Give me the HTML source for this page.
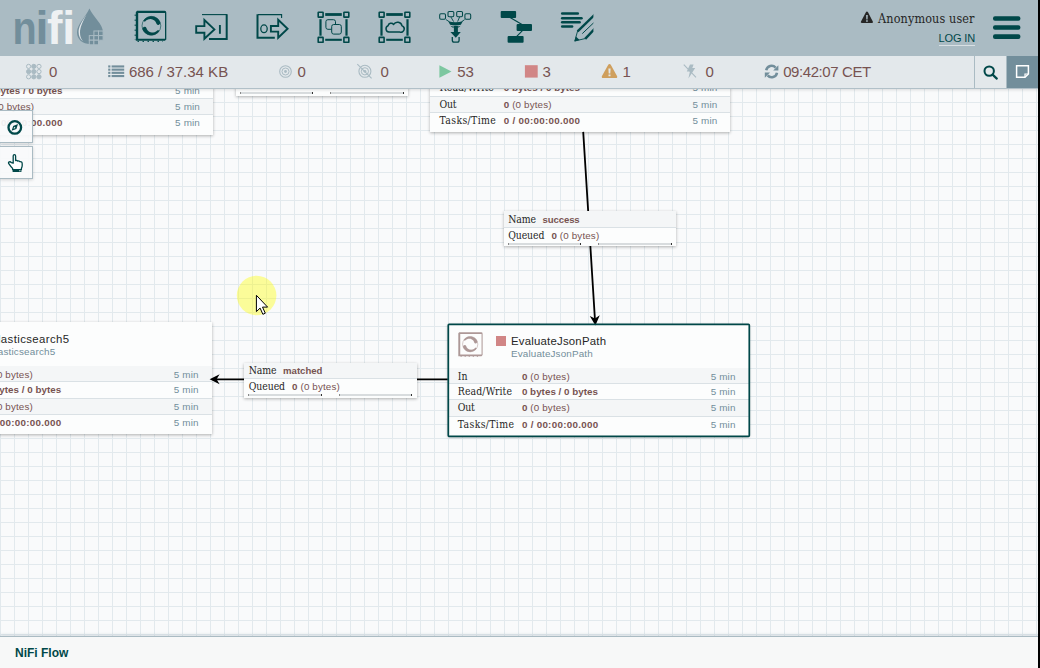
<!DOCTYPE html>
<html lang="en">
<head>
<meta charset="utf-8">
<title>NiFi Flow</title>
<style>
*{box-sizing:border-box;margin:0;padding:0}
html,body{width:1040px;height:668px;overflow:hidden}
body{position:relative;font-family:"Liberation Sans",sans-serif;background:#f9fafb;color:#262626}
.abs{position:absolute}
#canvas{position:absolute;left:0;top:56px;width:1040px;height:612px;background-color:#f9fafb;
background-image:linear-gradient(to right,#e2e9ed 1px,transparent 1px),linear-gradient(to bottom,#e2e9ed 1px,transparent 1px);
background-size:14px 14px;background-position:0px 4px;overflow:hidden}
#header{position:absolute;left:0;top:0;width:1040px;height:56px;background:#aabbc3}
#status{position:absolute;left:0;top:56px;width:1040px;height:32px;background:#e3e8eb;box-shadow:0 1px 0 #b1c0c8,0 2px 3px rgba(0,0,0,.13);clip-path:inset(0 0 -8px 0);font-size:15px;color:#775351}
#crumbs{position:absolute;left:0;top:636px;width:1040px;height:32px;background:#f7f8f8;border-top:1px solid #aabbc3;box-shadow:0 -1px 3px rgba(170,187,195,.5)}
#crumbs span{position:absolute;left:15px;top:9px;font-size:12px;font-weight:bold;color:#004849}
#strip{position:absolute;left:1038px;top:0;width:2px;height:668px;background:#000;z-index:50}
.serif{font-family:"DejaVu Serif","Liberation Serif",serif}
.t{position:absolute;white-space:nowrap;line-height:1}
.st{position:absolute;top:0;line-height:32px;white-space:nowrap;font-size:15px;color:#775351}
.ss{font-family:"Liberation Sans",sans-serif}
.sf{font-family:"DejaVu Serif Condensed","DejaVu Serif","Liberation Serif",serif}
.proc{position:absolute;width:300.6px;height:111.8px;background:#fcfdfd;box-shadow:0 1px 3px rgba(0,0,0,.3);overflow:visible}
.proc.sel{box-shadow:0 1px 3px rgba(0,0,0,.3)}
.row{position:absolute;left:0;width:100%}
.row.g{background:#f4f6f7}
.sep{position:absolute;left:0;width:100%;height:1px;background:#dae1e5}
.clabel{position:absolute;width:172.8px;height:35.2px;background:#fcfdfd;box-shadow:0 1px 3px rgba(0,0,0,.3)}
.bar{position:absolute;top:31.6px;width:73.5px;height:2.2px;background:#d8dcde;border-left:1px solid #8a8a8a;border-right:1px solid #333}
.pal{position:absolute;left:0;width:32.5px;height:33px;background:rgba(249,250,251,.93);border:1px solid #aabbc3;border-left:none;box-shadow:0 1px 3px rgba(0,0,0,.16)}
.t b{font-weight:bold}
</style>
</head>
<body>
<div id="canvas">
<div class="proc" style="left:-87.3px;top:-33.1px;width:300.1px">
<div class="row g" style="top:43.7px;height:15.6px"></div>
<div class="row g" style="top:75.7px;height:16.3px"></div>
<div class="sep" style="top:58.8px"></div>
<div class="sep" style="top:75.2px"></div>
<div class="sep" style="top:91.5px"></div>
<svg class="abs" style="left:9.7px;top:7.7px" width="25" height="25" viewBox="0 0 24.6 24.6"><path d="M1.2 0.3 H22.9 Q24.2 0.3 24.2 1.6 V22.6 L23.1 23.8 H0.3 V1.3 Z M2.2 1.9 V22.2 H23.2 V1.9 Z" fill="#ad9897" fill-rule="evenodd"/><path d="M2.5 24.2 H22" stroke="#ad9897" stroke-width=".8" stroke-dasharray="1.2 2.8" fill="none"/><circle cx="12" cy="12" r="7.5" fill="none" stroke="#ad9897" stroke-width=".5"/><path d="M5.55 7.97 L5.94 7.41 L6.38 6.88 L6.87 6.40 L7.39 5.96 L7.95 5.57 L8.55 5.23 L9.17 4.95 L9.82 4.72 L10.48 4.55 L11.16 4.45 L11.85 4.40 L12.53 4.42 L13.21 4.50 L13.88 4.64 L14.54 4.84 L15.17 5.09 L15.78 5.41 L16.36 5.77 L16.90 6.19 L17.41 6.66 L17.86 7.17 L18.28 7.71 L18.64 8.30 L18.94 8.91 A1.65 1.65 0 0 1 15.93 10.25 L15.82 9.87 L15.68 9.49 L15.50 9.11 L15.28 8.75 L15.03 8.41 L14.74 8.09 L14.41 7.79 L14.06 7.52 L13.67 7.28 L13.26 7.07 L12.82 6.90 L12.37 6.76 L11.89 6.67 L11.40 6.62 L10.91 6.62 L10.40 6.67 L9.90 6.76 L9.40 6.90 L8.91 7.09 L8.43 7.32 L7.97 7.60 L7.53 7.93 L7.12 8.30 L6.74 8.71 Z" fill="#ad9897"/><path d="M18.45 16.03 L18.06 16.59 L17.62 17.12 L17.13 17.60 L16.61 18.04 L16.05 18.43 L15.45 18.77 L14.83 19.05 L14.18 19.28 L13.52 19.45 L12.84 19.55 L12.15 19.60 L11.47 19.58 L10.79 19.50 L10.12 19.36 L9.46 19.16 L8.83 18.91 L8.22 18.59 L7.64 18.23 L7.10 17.81 L6.59 17.34 L6.14 16.83 L5.72 16.29 L5.36 15.70 L5.06 15.09 A1.65 1.65 0 0 1 8.07 13.75 L8.18 14.13 L8.32 14.51 L8.50 14.89 L8.72 15.25 L8.97 15.59 L9.26 15.91 L9.59 16.21 L9.94 16.48 L10.33 16.72 L10.74 16.93 L11.18 17.10 L11.63 17.24 L12.11 17.33 L12.60 17.38 L13.09 17.38 L13.60 17.33 L14.10 17.24 L14.60 17.10 L15.09 16.91 L15.57 16.68 L16.03 16.40 L16.47 16.07 L16.88 15.70 L17.26 15.29 Z" fill="#ad9897"/></svg>
<div class="abs" style="left:47.9px;top:11.9px;width:9.6px;height:9.6px;background:#d18686"></div>
</div>
<div class="proc" style="left:430.1px;top:-35.4px;width:300.1px">
<div class="row g" style="top:43.7px;height:15.6px"></div>
<div class="row g" style="top:75.7px;height:16.3px"></div>
<div class="sep" style="top:58.8px"></div>
<div class="sep" style="top:75.2px"></div>
<div class="sep" style="top:91.5px"></div>
<svg class="abs" style="left:9.7px;top:7.7px" width="25" height="25" viewBox="0 0 24.6 24.6"><path d="M1.2 0.3 H22.9 Q24.2 0.3 24.2 1.6 V22.6 L23.1 23.8 H0.3 V1.3 Z M2.2 1.9 V22.2 H23.2 V1.9 Z" fill="#ad9897" fill-rule="evenodd"/><path d="M2.5 24.2 H22" stroke="#ad9897" stroke-width=".8" stroke-dasharray="1.2 2.8" fill="none"/><circle cx="12" cy="12" r="7.5" fill="none" stroke="#ad9897" stroke-width=".5"/><path d="M5.55 7.97 L5.94 7.41 L6.38 6.88 L6.87 6.40 L7.39 5.96 L7.95 5.57 L8.55 5.23 L9.17 4.95 L9.82 4.72 L10.48 4.55 L11.16 4.45 L11.85 4.40 L12.53 4.42 L13.21 4.50 L13.88 4.64 L14.54 4.84 L15.17 5.09 L15.78 5.41 L16.36 5.77 L16.90 6.19 L17.41 6.66 L17.86 7.17 L18.28 7.71 L18.64 8.30 L18.94 8.91 A1.65 1.65 0 0 1 15.93 10.25 L15.82 9.87 L15.68 9.49 L15.50 9.11 L15.28 8.75 L15.03 8.41 L14.74 8.09 L14.41 7.79 L14.06 7.52 L13.67 7.28 L13.26 7.07 L12.82 6.90 L12.37 6.76 L11.89 6.67 L11.40 6.62 L10.91 6.62 L10.40 6.67 L9.90 6.76 L9.40 6.90 L8.91 7.09 L8.43 7.32 L7.97 7.60 L7.53 7.93 L7.12 8.30 L6.74 8.71 Z" fill="#ad9897"/><path d="M18.45 16.03 L18.06 16.59 L17.62 17.12 L17.13 17.60 L16.61 18.04 L16.05 18.43 L15.45 18.77 L14.83 19.05 L14.18 19.28 L13.52 19.45 L12.84 19.55 L12.15 19.60 L11.47 19.58 L10.79 19.50 L10.12 19.36 L9.46 19.16 L8.83 18.91 L8.22 18.59 L7.64 18.23 L7.10 17.81 L6.59 17.34 L6.14 16.83 L5.72 16.29 L5.36 15.70 L5.06 15.09 A1.65 1.65 0 0 1 8.07 13.75 L8.18 14.13 L8.32 14.51 L8.50 14.89 L8.72 15.25 L8.97 15.59 L9.26 15.91 L9.59 16.21 L9.94 16.48 L10.33 16.72 L10.74 16.93 L11.18 17.10 L11.63 17.24 L12.11 17.33 L12.60 17.38 L13.09 17.38 L13.60 17.33 L14.10 17.24 L14.60 17.10 L15.09 16.91 L15.57 16.68 L16.03 16.40 L16.47 16.07 L16.88 15.70 L17.26 15.29 Z" fill="#ad9897"/></svg>
<div class="abs" style="left:47.9px;top:11.9px;width:9.6px;height:9.6px;background:#d18686"></div>
</div>
<div class="proc" style="left:-88.6px;top:266.4px;width:300.1px">
<div class="row g" style="top:43.7px;height:15.6px"></div>
<div class="row g" style="top:75.7px;height:16.3px"></div>
<div class="sep" style="top:58.8px"></div>
<div class="sep" style="top:75.2px"></div>
<div class="sep" style="top:91.5px"></div>
<svg class="abs" style="left:9.7px;top:7.7px" width="25" height="25" viewBox="0 0 24.6 24.6"><path d="M1.2 0.3 H22.9 Q24.2 0.3 24.2 1.6 V22.6 L23.1 23.8 H0.3 V1.3 Z M2.2 1.9 V22.2 H23.2 V1.9 Z" fill="#ad9897" fill-rule="evenodd"/><path d="M2.5 24.2 H22" stroke="#ad9897" stroke-width=".8" stroke-dasharray="1.2 2.8" fill="none"/><circle cx="12" cy="12" r="7.5" fill="none" stroke="#ad9897" stroke-width=".5"/><path d="M5.55 7.97 L5.94 7.41 L6.38 6.88 L6.87 6.40 L7.39 5.96 L7.95 5.57 L8.55 5.23 L9.17 4.95 L9.82 4.72 L10.48 4.55 L11.16 4.45 L11.85 4.40 L12.53 4.42 L13.21 4.50 L13.88 4.64 L14.54 4.84 L15.17 5.09 L15.78 5.41 L16.36 5.77 L16.90 6.19 L17.41 6.66 L17.86 7.17 L18.28 7.71 L18.64 8.30 L18.94 8.91 A1.65 1.65 0 0 1 15.93 10.25 L15.82 9.87 L15.68 9.49 L15.50 9.11 L15.28 8.75 L15.03 8.41 L14.74 8.09 L14.41 7.79 L14.06 7.52 L13.67 7.28 L13.26 7.07 L12.82 6.90 L12.37 6.76 L11.89 6.67 L11.40 6.62 L10.91 6.62 L10.40 6.67 L9.90 6.76 L9.40 6.90 L8.91 7.09 L8.43 7.32 L7.97 7.60 L7.53 7.93 L7.12 8.30 L6.74 8.71 Z" fill="#ad9897"/><path d="M18.45 16.03 L18.06 16.59 L17.62 17.12 L17.13 17.60 L16.61 18.04 L16.05 18.43 L15.45 18.77 L14.83 19.05 L14.18 19.28 L13.52 19.45 L12.84 19.55 L12.15 19.60 L11.47 19.58 L10.79 19.50 L10.12 19.36 L9.46 19.16 L8.83 18.91 L8.22 18.59 L7.64 18.23 L7.10 17.81 L6.59 17.34 L6.14 16.83 L5.72 16.29 L5.36 15.70 L5.06 15.09 A1.65 1.65 0 0 1 8.07 13.75 L8.18 14.13 L8.32 14.51 L8.50 14.89 L8.72 15.25 L8.97 15.59 L9.26 15.91 L9.59 16.21 L9.94 16.48 L10.33 16.72 L10.74 16.93 L11.18 17.10 L11.63 17.24 L12.11 17.33 L12.60 17.38 L13.09 17.38 L13.60 17.33 L14.10 17.24 L14.60 17.10 L15.09 16.91 L15.57 16.68 L16.03 16.40 L16.47 16.07 L16.88 15.70 L17.26 15.29 Z" fill="#ad9897"/></svg>
<div class="abs" style="left:47.9px;top:11.9px;width:9.6px;height:9.6px;background:#d18686"></div>
</div>
<div class="proc sel" style="left:448.3px;top:268.3px;width:300.6px">
<div class="row g" style="top:43.7px;height:15.6px"></div>
<div class="row g" style="top:75.7px;height:16.3px"></div>
<div class="sep" style="top:58.8px"></div>
<div class="sep" style="top:75.2px"></div>
<div class="sep" style="top:91.5px"></div>
<svg class="abs" style="left:9.7px;top:7.7px" width="25" height="25" viewBox="0 0 24.6 24.6"><path d="M1.2 0.3 H22.9 Q24.2 0.3 24.2 1.6 V22.6 L23.1 23.8 H0.3 V1.3 Z M2.2 1.9 V22.2 H23.2 V1.9 Z" fill="#ad9897" fill-rule="evenodd"/><path d="M2.5 24.2 H22" stroke="#ad9897" stroke-width=".8" stroke-dasharray="1.2 2.8" fill="none"/><circle cx="12" cy="12" r="7.5" fill="none" stroke="#ad9897" stroke-width=".5"/><path d="M5.55 7.97 L5.94 7.41 L6.38 6.88 L6.87 6.40 L7.39 5.96 L7.95 5.57 L8.55 5.23 L9.17 4.95 L9.82 4.72 L10.48 4.55 L11.16 4.45 L11.85 4.40 L12.53 4.42 L13.21 4.50 L13.88 4.64 L14.54 4.84 L15.17 5.09 L15.78 5.41 L16.36 5.77 L16.90 6.19 L17.41 6.66 L17.86 7.17 L18.28 7.71 L18.64 8.30 L18.94 8.91 A1.65 1.65 0 0 1 15.93 10.25 L15.82 9.87 L15.68 9.49 L15.50 9.11 L15.28 8.75 L15.03 8.41 L14.74 8.09 L14.41 7.79 L14.06 7.52 L13.67 7.28 L13.26 7.07 L12.82 6.90 L12.37 6.76 L11.89 6.67 L11.40 6.62 L10.91 6.62 L10.40 6.67 L9.90 6.76 L9.40 6.90 L8.91 7.09 L8.43 7.32 L7.97 7.60 L7.53 7.93 L7.12 8.30 L6.74 8.71 Z" fill="#ad9897"/><path d="M18.45 16.03 L18.06 16.59 L17.62 17.12 L17.13 17.60 L16.61 18.04 L16.05 18.43 L15.45 18.77 L14.83 19.05 L14.18 19.28 L13.52 19.45 L12.84 19.55 L12.15 19.60 L11.47 19.58 L10.79 19.50 L10.12 19.36 L9.46 19.16 L8.83 18.91 L8.22 18.59 L7.64 18.23 L7.10 17.81 L6.59 17.34 L6.14 16.83 L5.72 16.29 L5.36 15.70 L5.06 15.09 A1.65 1.65 0 0 1 8.07 13.75 L8.18 14.13 L8.32 14.51 L8.50 14.89 L8.72 15.25 L8.97 15.59 L9.26 15.91 L9.59 16.21 L9.94 16.48 L10.33 16.72 L10.74 16.93 L11.18 17.10 L11.63 17.24 L12.11 17.33 L12.60 17.38 L13.09 17.38 L13.60 17.33 L14.10 17.24 L14.60 17.10 L15.09 16.91 L15.57 16.68 L16.03 16.40 L16.47 16.07 L16.88 15.70 L17.26 15.29 Z" fill="#ad9897"/></svg>
<div class="abs" style="left:47.9px;top:11.9px;width:9.6px;height:9.6px;background:#d18686"></div>
</div>
<div class="t ss" style="top:-22px;font-size:11.4px;color:#262626;letter-spacing:0.402px;right:968.40px;">PutElasticsearch5</div>
<div class="t ss" style="top:-8px;font-size:9.9px;color:#728e9b;letter-spacing:0.185px;right:983.00px;">PutElasticsearch5</div>
<div class="t sf" style="top:13px;font-size:10.4px;color:#262626;letter-spacing:-0.059px;left:-77.80px;">In</div>
<div class="t ss" style="top:14px;font-size:9.8px;color:#775351;letter-spacing:0.146px;left:-13.70px;"><b>0</b> (0 bytes)</div>
<div class="t ss" style="top:14px;font-size:9.9px;color:#728e9b;letter-spacing:0.149px;left:175.10px;">5 min</div>
<div class="t sf" style="top:29px;font-size:10.4px;color:#262626;letter-spacing:0.114px;left:-77.80px;">Read/Write</div>
<div class="t ss" style="top:30px;font-size:9.8px;color:#775351;letter-spacing:0.029px;left:-13.70px;"><b>0 bytes / 0 bytes</b></div>
<div class="t ss" style="top:30px;font-size:9.9px;color:#728e9b;letter-spacing:0.149px;left:175.10px;">5 min</div>
<div class="t sf" style="top:45px;font-size:10.4px;color:#262626;letter-spacing:-0.218px;left:-77.80px;">Out</div>
<div class="t ss" style="top:46px;font-size:9.8px;color:#775351;letter-spacing:0.146px;left:-13.70px;"><b>0</b> (0 bytes)</div>
<div class="t ss" style="top:46px;font-size:9.9px;color:#728e9b;letter-spacing:0.149px;left:175.10px;">5 min</div>
<div class="t sf" style="top:61px;font-size:10.4px;color:#262626;letter-spacing:0.347px;left:-77.80px;">Tasks/Time</div>
<div class="t ss" style="top:62px;font-size:9.8px;color:#775351;letter-spacing:0.287px;left:-13.70px;"><b>0 / 00:00:00.000</b></div>
<div class="t ss" style="top:62px;font-size:9.9px;color:#728e9b;letter-spacing:0.149px;left:175.10px;">5 min</div>
<div class="t ss" style="top:-24px;font-size:11.4px;color:#262626;letter-spacing:0.211px;left:492.80px;">EvaluateJsonPath</div>
<div class="t ss" style="top:-11px;font-size:9.9px;color:#728e9b;letter-spacing:0.137px;left:492.80px;">EvaluateJsonPath</div>
<div class="t sf" style="top:11px;font-size:10.4px;color:#262626;letter-spacing:-0.059px;left:439.60px;">In</div>
<div class="t ss" style="top:12px;font-size:9.8px;color:#775351;letter-spacing:0.146px;left:503.70px;"><b>0</b> (0 bytes)</div>
<div class="t ss" style="top:12px;font-size:9.9px;color:#728e9b;letter-spacing:0.149px;left:692.50px;">5 min</div>
<div class="t sf" style="top:26px;font-size:10.4px;color:#262626;letter-spacing:0.114px;left:439.60px;">Read/Write</div>
<div class="t ss" style="top:27px;font-size:9.8px;color:#775351;letter-spacing:0.029px;left:503.70px;"><b>0 bytes / 0 bytes</b></div>
<div class="t ss" style="top:27px;font-size:9.9px;color:#728e9b;letter-spacing:0.149px;left:692.50px;">5 min</div>
<div class="t sf" style="top:43px;font-size:10.4px;color:#262626;letter-spacing:-0.218px;left:439.60px;">Out</div>
<div class="t ss" style="top:44px;font-size:9.8px;color:#775351;letter-spacing:0.146px;left:503.70px;"><b>0</b> (0 bytes)</div>
<div class="t ss" style="top:44px;font-size:9.9px;color:#728e9b;letter-spacing:0.149px;left:692.50px;">5 min</div>
<div class="t sf" style="top:59px;font-size:10.4px;color:#262626;letter-spacing:0.347px;left:439.60px;">Tasks/Time</div>
<div class="t ss" style="top:60px;font-size:9.8px;color:#775351;letter-spacing:0.287px;left:503.70px;"><b>0 / 00:00:00.000</b></div>
<div class="t ss" style="top:60px;font-size:9.9px;color:#728e9b;letter-spacing:0.149px;left:692.50px;">5 min</div>
<div class="t ss" style="top:278px;font-size:11.4px;color:#262626;letter-spacing:0.402px;right:970.40px;">PutElasticsearch5</div>
<div class="t ss" style="top:291px;font-size:9.9px;color:#728e9b;letter-spacing:0.185px;right:984.60px;">PutElasticsearch5</div>
<div class="t sf" style="top:313px;font-size:10.4px;color:#262626;letter-spacing:-0.059px;left:-79.10px;">In</div>
<div class="t ss" style="top:314px;font-size:9.8px;color:#775351;letter-spacing:0.146px;left:-15.00px;"><b>0</b> (0 bytes)</div>
<div class="t ss" style="top:314px;font-size:9.9px;color:#728e9b;letter-spacing:0.149px;left:173.80px;">5 min</div>
<div class="t sf" style="top:328px;font-size:10.4px;color:#262626;letter-spacing:0.114px;left:-79.10px;">Read/Write</div>
<div class="t ss" style="top:329px;font-size:9.8px;color:#775351;letter-spacing:0.029px;left:-15.00px;"><b>0 bytes / 0 bytes</b></div>
<div class="t ss" style="top:329px;font-size:9.9px;color:#728e9b;letter-spacing:0.149px;left:173.80px;">5 min</div>
<div class="t sf" style="top:345px;font-size:10.4px;color:#262626;letter-spacing:-0.218px;left:-79.10px;">Out</div>
<div class="t ss" style="top:346px;font-size:9.8px;color:#775351;letter-spacing:0.146px;left:-15.00px;"><b>0</b> (0 bytes)</div>
<div class="t ss" style="top:346px;font-size:9.9px;color:#728e9b;letter-spacing:0.149px;left:173.80px;">5 min</div>
<div class="t sf" style="top:361px;font-size:10.4px;color:#262626;letter-spacing:0.347px;left:-79.10px;">Tasks/Time</div>
<div class="t ss" style="top:362px;font-size:9.8px;color:#775351;letter-spacing:0.287px;left:-15.00px;"><b>0 / 00:00:00.000</b></div>
<div class="t ss" style="top:362px;font-size:9.9px;color:#728e9b;letter-spacing:0.149px;left:173.80px;">5 min</div>
<div class="t ss" style="top:280px;font-size:11.4px;color:#262626;letter-spacing:0.211px;left:511.00px;">EvaluateJsonPath</div>
<div class="t ss" style="top:293px;font-size:9.9px;color:#728e9b;letter-spacing:0.137px;left:511.00px;">EvaluateJsonPath</div>
<div class="t sf" style="top:315px;font-size:10.4px;color:#262626;letter-spacing:-0.059px;left:457.80px;">In</div>
<div class="t ss" style="top:316px;font-size:9.8px;color:#775351;letter-spacing:0.146px;left:521.90px;"><b>0</b> (0 bytes)</div>
<div class="t ss" style="top:316px;font-size:9.9px;color:#728e9b;letter-spacing:0.149px;left:710.70px;">5 min</div>
<div class="t sf" style="top:330px;font-size:10.4px;color:#262626;letter-spacing:0.114px;left:457.80px;">Read/Write</div>
<div class="t ss" style="top:331px;font-size:9.8px;color:#775351;letter-spacing:0.029px;left:521.90px;"><b>0 bytes / 0 bytes</b></div>
<div class="t ss" style="top:331px;font-size:9.9px;color:#728e9b;letter-spacing:0.149px;left:710.70px;">5 min</div>
<div class="t sf" style="top:346px;font-size:10.4px;color:#262626;letter-spacing:-0.218px;left:457.80px;">Out</div>
<div class="t ss" style="top:347px;font-size:9.8px;color:#775351;letter-spacing:0.146px;left:521.90px;"><b>0</b> (0 bytes)</div>
<div class="t ss" style="top:347px;font-size:9.9px;color:#728e9b;letter-spacing:0.149px;left:710.70px;">5 min</div>
<div class="t sf" style="top:363px;font-size:10.4px;color:#262626;letter-spacing:0.347px;left:457.80px;">Tasks/Time</div>
<div class="t ss" style="top:364px;font-size:9.8px;color:#775351;letter-spacing:0.287px;left:521.90px;"><b>0 / 00:00:00.000</b></div>
<div class="t ss" style="top:364px;font-size:9.9px;color:#728e9b;letter-spacing:0.149px;left:710.70px;">5 min</div>
<svg class="abs" style="left:0;top:0" width="1040" height="612" viewBox="0 0 1040 612"><path d="M583.2 75.9 L595.1 265.6" stroke="#000" stroke-width="1.8" fill="none"/><path d="M0 0 L-10 -5 L-7 0 L-10 5 Z" fill="#000" transform="translate(595.4 269.6) rotate(86.4)"/><path d="M447.8 323.3 H214" stroke="#000" stroke-width="1.8" fill="none"/><path d="M0 0 L-10 -5 L-7 0 L-10 5 Z" fill="#000" transform="translate(209.6 323.3) rotate(180.0)"/><rect x="448.3" y="268.4" width="301" height="112" rx="0.8" fill="none" stroke="#004849" stroke-width="1.72"/></svg>
<div class="clabel" style="left:235.6px;top:4.6px">
<div class="row g" style="top:0;height:16.1px"></div>
<div class="sep" style="top:15.7px"></div>
<div class="bar" style="left:4.3px"></div>
<div class="bar" style="left:94.8px"></div>
</div>
<div class="clabel" style="left:503.6px;top:155.2px">
<div class="row g" style="top:0;height:16.1px"></div>
<div class="sep" style="top:15.7px"></div>
<div class="bar" style="left:4.3px"></div>
<div class="bar" style="left:94.8px"></div>
</div>
<div class="clabel" style="left:244.2px;top:306.6px">
<div class="row g" style="top:0;height:16.1px"></div>
<div class="sep" style="top:15.7px"></div>
<div class="bar" style="left:4.3px"></div>
<div class="bar" style="left:94.8px"></div>
</div>
<div class="t sf" style="top:6px;font-size:10.4px;color:#262626;letter-spacing:-0.114px;left:240.20px;">Name</div>
<div class="t ss" style="top:7px;font-size:9.6px;color:#775351;font-weight:bold;letter-spacing:-0.022px;left:274.50px;">matched</div>
<div class="t sf" style="top:22px;font-size:10.4px;color:#262626;letter-spacing:-0.094px;left:240.20px;">Queued</div>
<div class="t ss" style="top:23px;font-size:9.8px;color:#775351;letter-spacing:0.146px;left:283.40px;"><b>0</b> (0 bytes)</div>
<div class="t sf" style="top:158px;font-size:10.4px;color:#262626;letter-spacing:-0.114px;left:508.20px;">Name</div>
<div class="t ss" style="top:159px;font-size:9.6px;color:#775351;font-weight:bold;letter-spacing:-0.111px;left:542.50px;">success</div>
<div class="t sf" style="top:174px;font-size:10.4px;color:#262626;letter-spacing:-0.094px;left:508.20px;">Queued</div>
<div class="t ss" style="top:175px;font-size:9.8px;color:#775351;letter-spacing:0.146px;left:551.40px;"><b>0</b> (0 bytes)</div>
<div class="t sf" style="top:309px;font-size:10.4px;color:#262626;letter-spacing:-0.114px;left:248.80px;">Name</div>
<div class="t ss" style="top:310px;font-size:9.6px;color:#775351;font-weight:bold;letter-spacing:-0.022px;left:283.10px;">matched</div>
<div class="t sf" style="top:325px;font-size:10.4px;color:#262626;letter-spacing:-0.094px;left:248.80px;">Queued</div>
<div class="t ss" style="top:326px;font-size:9.8px;color:#775351;letter-spacing:0.146px;left:292.00px;"><b>0</b> (0 bytes)</div>
<svg class="abs" style="left:230px;top:214px" width="60" height="60" viewBox="230 270 60 60"><circle cx="256.6" cy="295.5" r="19.8" fill="rgba(255,255,0,.39)"/><path d="M256.4 295.3 V311.6 L260.1 308.1 L262.9 314.3 L265.3 313.2 L262.5 307.1 H267.6 Z" fill="#fff" stroke="#000" stroke-width="1" stroke-linejoin="miter"/></svg>
<div class="pal" style="top:54.0px"><svg class="abs" style="left:0;top:-1px" width="33" height="33" viewBox="0 0 33 33"><circle cx="14.8" cy="17.4" r="6.3" fill="none" stroke="#004849" stroke-width="2.3"/><path d="M18 14.1 L16.4 18.9 L11.6 20.7 L13.2 15.9 Z M14.1 16.7 L13.6 18.7 L15.6 18.1 Z" fill="#004849" fill-rule="evenodd"/></svg></div>
<div class="pal" style="top:90.0px"><svg class="abs" style="left:0;top:-1px" width="33" height="33" viewBox="0 0 33 33"><path d="M13.2 17.2 V10 Q13.2 8.7 14.4 8.7 Q15.6 8.7 15.6 10 V14.6 Q16.8 14 17.6 15 Q18.8 14.4 19.8 15.6 Q22.2 15.4 22.2 17.8 V19.6 Q22.2 21 21.4 22.4 V23.6 H12.6 V22.4 Q10.6 20.4 8.6 17.4 Q8.2 16.2 9.4 15.8 Q10.6 15.6 11.4 16.6 Z" fill="#fff" stroke="#004849" stroke-width="1.3" stroke-linejoin="round"/><rect x="12.6" y="23.4" width="8.8" height="2.6" fill="#004849"/><rect x="19.3" y="24.2" width="1.1" height="1.1" fill="#fff"/></svg></div>
</div>
<div id="header">
<svg class="abs" style="left:0;top:0" width="1040" height="56" viewBox="0 0 1040 56">
<!-- logo -->
<g font-family="Liberation Sans, sans-serif" font-weight="bold" font-size="46.5">
<text transform="translate(12.47,43.5) scale(0.85,1)" fill="#728e9b">n</text>
<text x="35.42" y="43.5" fill="#728e9b">i</text>
<text x="47.1 62.37" y="43.5" fill="#eef1f3">fi</text>
</g>
<path d="M89.4 8.6 C93 17 103 24 103 32.5 C103 39.5 97 44 90 44 C83 44 77 39.5 77 32.5 C77 24 86 17 89.4 8.6Z" fill="#728e9b"/>
<path d="M86.5 14.5 C81.5 22 78.6 27 78.6 32 C78.6 36 80 39 83 41.2 C80.8 38.5 80 36 80 32.5 C80 27.5 82.5 22 86.5 14.5Z" fill="#e3e8eb"/>
<g fill="#728e9b" stroke="#aabbc3" stroke-width="1">
<rect x="93.9" y="31.0" width="4.6" height="4.6"/><rect x="98.5" y="31.0" width="4.6" height="4.6"/><rect x="89.3" y="35.6" width="4.6" height="4.6"/><rect x="93.9" y="35.6" width="4.6" height="4.6"/><rect x="98.5" y="35.6" width="4.6" height="4.6"/><rect x="89.3" y="40.2" width="4.6" height="4.6"/><rect x="93.9" y="40.2" width="4.6" height="4.6"/>
</g>
<!-- processor -->
<g id="procicon">
<path d="M137 10.8 H164.6 Q166.3 10.8 166.3 12.6 V39.4 L164.9 40.8 H135.8 V12.2 Z M138.2 12.9 V38.8 H165 V12.9 Z" fill="#004849" fill-rule="evenodd"/>
<path d="M135.2 14.5 V40" stroke="#004849" stroke-width="1" stroke-dasharray="1.5 3.5" fill="none"/>
<path d="M137.5 41.4 H163" stroke="#004849" stroke-width="1" stroke-dasharray="1.5 3.5" fill="none"/>
<circle cx="151.4" cy="25.8" r="9.4" stroke="#004849" stroke-width="0.6" fill="none"/>
<path d="M143.34 20.77 L143.83 20.06 L144.38 19.40 L144.98 18.80 L145.64 18.25 L146.34 17.76 L147.09 17.34 L147.87 16.98 L148.68 16.70 L149.51 16.49 L150.35 16.36 L151.21 16.30 L152.06 16.32 L152.91 16.42 L153.75 16.60 L154.57 16.84 L155.36 17.17 L156.13 17.56 L156.85 18.02 L157.53 18.54 L158.16 19.12 L158.73 19.76 L159.24 20.44 L159.70 21.17 L160.08 21.94 A2.05 2.05 0 0 1 156.33 23.60 L156.20 23.12 L156.02 22.65 L155.79 22.18 L155.51 21.73 L155.19 21.31 L154.83 20.91 L154.42 20.53 L153.97 20.20 L153.49 19.90 L152.97 19.64 L152.43 19.43 L151.86 19.27 L151.26 19.16 L150.66 19.10 L150.04 19.10 L149.41 19.16 L148.79 19.28 L148.17 19.45 L147.56 19.69 L146.96 19.98 L146.39 20.33 L145.85 20.74 L145.34 21.21 L144.87 21.72 Z" fill="#004849"/>
<path d="M159.46 30.83 L158.97 31.54 L158.42 32.20 L157.82 32.80 L157.16 33.35 L156.46 33.84 L155.71 34.26 L154.93 34.62 L154.12 34.90 L153.29 35.11 L152.45 35.24 L151.59 35.30 L150.74 35.28 L149.89 35.18 L149.05 35.00 L148.23 34.76 L147.44 34.43 L146.67 34.04 L145.95 33.58 L145.27 33.06 L144.64 32.48 L144.07 31.84 L143.56 31.16 L143.10 30.43 L142.72 29.66 A2.05 2.05 0 0 1 146.47 28.00 L146.60 28.48 L146.78 28.95 L147.01 29.42 L147.29 29.87 L147.61 30.29 L147.97 30.69 L148.38 31.07 L148.83 31.40 L149.31 31.70 L149.83 31.96 L150.37 32.17 L150.94 32.33 L151.54 32.44 L152.14 32.50 L152.76 32.50 L153.39 32.44 L154.01 32.32 L154.63 32.15 L155.24 31.91 L155.84 31.62 L156.41 31.27 L156.95 30.86 L157.46 30.39 L157.93 29.88 Z" fill="#004849"/>
</g>
<!-- input port -->
<g fill="none" stroke="#004849">
<path d="M202 14.6 H227" stroke-width="1.1"/>
<path d="M226.7 14.2 V38.9 H209" stroke-width="2"/>
<path d="M196.2 26.1 H204.4 V20 L214.4 29.4 L204.4 38.8 V32.8 H196.2 Z" stroke-width="1.9" stroke-linejoin="miter"/>
<path d="M219.9 25 V33.8" stroke-width="1.9"/>
</g>
<!-- output port -->
<g fill="none" stroke="#004849">
<path d="M258 14.6 H281.6 V18" stroke-width="1.1"/>
<path d="M257.5 14.2 V37.8 H274.8" stroke-width="2"/>
<ellipse cx="264" cy="28.8" rx="3.2" ry="3.9" stroke-width="1.3"/>
<path d="M270.9 26 H278.2 V19.8 L287.6 28.8 L278.2 37.8 V31.6 H270.9 Z" stroke-width="1.9" stroke-linejoin="miter"/>
</g>
<!-- process group -->
<g id="pgframe" fill="none" stroke="#004849">
<rect x="318.2" y="12.2" width="4.9" height="4.9" stroke-width="1.6" rx="0.4"/>
<rect x="343.9" y="12.2" width="4.9" height="4.9" stroke-width="1.6" rx="0.4"/>
<rect x="318.2" y="37.4" width="4.9" height="4.9" stroke-width="1.6" rx="0.4"/>
<rect x="343.9" y="37.4" width="4.9" height="4.9" stroke-width="1.6" rx="0.4"/>
<path d="M325.2 14.5 H341.8" stroke-width="2.8"/>
<path d="M325.2 39.8 H341.8" stroke-width="2.1"/>
<path d="M320.5 19.2 V35.7" stroke-width="2.2"/>
<path d="M346.5 19.2 V35.7" stroke-width="2.2"/>
</g>
<g fill="#aabbc3" stroke="#004849" stroke-width="1">
<rect x="325.9" y="19.7" width="9.6" height="9.6" rx="2"/>
<rect x="331.7" y="24.5" width="9.6" height="9.6" rx="2"/>
</g>
<!-- remote process group -->
<use href="#pgframe" x="61" y="0"/>
<path d="M389 32.1 A3.3 3.3 0 0 1 388 25.8 A3.2 3.2 0 0 1 393.6 24.4 A4.6 4.6 0 0 1 402 25.9 A3.2 3.2 0 0 1 399.8 32.1 Z" fill="none" stroke="#004849" stroke-width="1.5" stroke-linejoin="round"/>
<!-- funnel -->
<g fill="none" stroke="#004849" stroke-width="1.05">
<rect x="439.7" y="13.7" width="5.8" height="5.6" rx="1.2"/>
<rect x="448" y="11.4" width="5.8" height="5.4" rx="1.2"/>
<rect x="456.7" y="11.4" width="5.8" height="5.4" rx="1.2"/>
<rect x="464.9" y="13.7" width="5.8" height="5.6" rx="1.2"/>
<path d="M450.9 17 L453.6 21.6 M459.6 17 L457.6 21.6 M446 19.6 L449.4 21.8 M464.6 19.6 L461.6 21.8" stroke-width="0.9"/>
<path d="M452.3 37 V40.3 Q452.3 42.2 454.2 42.2 H457.2 Q459.1 42.2 459.1 40.3 V37" stroke-width="1.3"/>
</g>
<path d="M448.2 21.3 Q455.5 23.2 462.8 21.3 L460.9 24.7 Q455.5 26.3 450.1 24.7 Z" fill="#004849"/>
<path d="M450.3 25.7 Q455.5 27.5 460.7 25.7 L458.6 27.5 H452.4 Z" fill="#004849"/>
<path d="M453.9 26 H457.9 V32 H460.8 L455.8 37.8 L450.4 32 H453.9 Z" fill="#004849"/>
<!-- template -->
<g fill="#004849" stroke="none">
<rect x="500.7" y="11" width="15.4" height="6.9" rx="1"/>
<rect x="516.6" y="24.1" width="15.4" height="6.8" rx="1"/>
<rect x="507.6" y="36.1" width="16" height="6.7" rx="1"/>
</g>
<path d="M510.1 17.6 L522 24.4 M522.4 30.6 L516.8 36.4" stroke="#004849" stroke-width="1.2" fill="none"/>
<!-- label -->
<clipPath id="pclip"><rect x="560" y="8" width="33.4" height="40"/></clipPath>
<g stroke="#004849" fill="none" stroke-linecap="round">
<path d="M562.2 13.4 H577.8" stroke-width="2.5"/>
<path d="M562.2 18.2 H581.5" stroke-width="2.5"/>
<path d="M562.2 22.3 H579.6" stroke-width="2.5"/>
<path d="M562.2 26.6 H572.1" stroke-width="2.5"/>
</g>
<g stroke="#004849" fill="none" clip-path="url(#pclip)">
<path d="M577.6 31.4 L596 13.5" stroke-width="2.4"/>
<path d="M585.2 38.8 L596 27.5" stroke-width="2.4"/>
<path d="M582.3 33.6 L595 21.5" stroke-width="1"/>
<path d="M577.6 31 L574.8 41 L585 38.6" stroke-width="0.9"/>
</g>
<path d="M574.4 41.4 L575.9 36.4 L579.6 40.1 Z" fill="#004849"/>
<!-- user warning -->
<path d="M866.9 11.6 Q867.6 11.6 868 12.3 L872.8 21.4 Q873.2 22.2 872.9 22.6 Q872.6 23 872 23 H861.9 Q861.2 23 860.9 22.6 Q860.6 22.2 861 21.4 L865.9 12.3 Q866.3 11.6 866.9 11.6Z M866.1 15 L866.3 19.4 H867.6 L867.8 15 Z M866.1 20.2 V21.7 H867.8 V20.2 Z" fill="#262626" fill-rule="evenodd"/>
<!-- hamburger -->
<g fill="#004849">
<rect x="993" y="16.2" width="27.4" height="4.6" rx="2"/>
<rect x="993" y="25.2" width="27.4" height="4.6" rx="2"/>
<rect x="993" y="34.3" width="27.4" height="4.6" rx="2"/>
</g>
</svg>
<div class="t sf" id="anon" style="left:878px;top:13px;font-size:12.5px;letter-spacing:.13px;color:#262626">Anonymous user</div>
<div class="t" id="login" style="left:938.6px;top:33.4px;font-size:11px;letter-spacing:-0.15px;color:#004849;border-bottom:1px solid rgba(255,255,255,.55);padding-bottom:1px">LOG IN</div>
</div>
<div id="status">
<svg class="abs" style="left:0;top:0" width="1040" height="32" viewBox="0 56 1040 32">
<!-- cluster -->
<g fill="none" stroke="#aabbc3" stroke-width="1">
<circle cx="28.6" cy="66.4" r="2.1"/><circle cx="33.8" cy="66.4" r="2.1" fill="#aabbc3"/><circle cx="39" cy="66.4" r="2.1"/>
<circle cx="28.6" cy="71.6" r="2.1" fill="#aabbc3"/><circle cx="33.8" cy="71.6" r="2.1" fill="#aabbc3"/><circle cx="39" cy="71.6" r="2.1"/>
<circle cx="28.6" cy="76.8" r="2.1"/><circle cx="33.8" cy="76.8" r="2.1" fill="#aabbc3"/><circle cx="39" cy="76.8" r="2.1" fill="#aabbc3"/>
</g>
<!-- list -->
<g fill="#728e9b">
<rect x="108.2" y="65.4" width="2.2" height="2.1"/><rect x="111.6" y="65.4" width="12.6" height="2.1"/>
<rect x="108.2" y="68.6" width="2.2" height="2.1"/><rect x="111.6" y="68.6" width="12.6" height="2.1"/>
<rect x="108.2" y="71.8" width="2.2" height="2.1"/><rect x="111.6" y="71.8" width="12.6" height="2.1"/>
<rect x="108.2" y="75" width="2.2" height="2.1"/><rect x="111.6" y="75" width="12.6" height="2.1"/>
</g>
<!-- bullseye -->
<g fill="none" stroke="#aabbc3">
<circle cx="285.5" cy="71.5" r="5.8" stroke-width="1.1"/>
<circle cx="285.5" cy="71.5" r="3.5" stroke-width="1"/>
<circle cx="285.5" cy="71.5" r="1.4" fill="#aabbc3" stroke="none"/>
</g>
<!-- transmit false -->
<g fill="none" stroke="#aabbc3">
<circle cx="364.9" cy="71.3" r="6" stroke-width="1.1"/>
<circle cx="364.9" cy="71.3" r="3.6" stroke-width="1"/>
<circle cx="364.9" cy="71.3" r="1.4" fill="#aabbc3" stroke="none"/>
<path d="M357.3 64.2 L371.6 78.4" stroke-width="1.1"/>
</g>
<!-- play -->
<path d="M439.4 65.2 L451.5 71.5 L439.4 77.8 Z" fill="#7dc7a0"/>
<!-- stop -->
<rect x="524.9" y="65.2" width="12.8" height="12.4" fill="#d18686"/>
<!-- warning -->
<path d="M609.5 64.1 Q610.4 64.1 610.9 65 L617 76 Q617.5 77 617.1 77.4 Q616.8 77.9 616 77.9 H603 Q602.2 77.9 601.9 77.4 Q601.5 77 602 76 L608.1 65 Q608.6 64.1 609.5 64.1Z M608.4 68.4 L608.7 73.4 H610.3 L610.6 68.4 Z M608.5 74.4 V76.3 H610.5 V74.4 Z" fill="#cf9f5d" fill-rule="evenodd"/>
<!-- disabled -->
<g>
<path d="M690 64.5 H693.6 L692.3 67.9 H695.2 L688.4 78.6 L689.9 71.4 H686.8 Z" fill="#aabbc3"/>
<path d="M683.8 64.6 L696 77.4" stroke="#aabbc3" stroke-width="1.1" fill="none"/>
</g>
<!-- refresh -->
<g fill="none" stroke="#728e9b" stroke-width="2.5">
<path d="M766.2 70.2 A5.4 5.4 0 0 1 775.6 67.6"/>
<path d="M777 72.8 A5.4 5.4 0 0 1 767.6 75.4"/>
</g>
<path d="M778.4 65.2 V70.4 H773.2 Z" fill="#728e9b"/>
<path d="M764.8 77.8 V72.6 H770 Z" fill="#728e9b"/>
<!-- search separator + icon -->
<rect x="974" y="56" width="1" height="32" fill="#aabbc3"/>
<circle cx="989.2" cy="71.1" r="4.7" fill="none" stroke="#004849" stroke-width="2"/>
<path d="M992.6 74.6 L996.8 78.6" stroke="#004849" stroke-width="2.2" stroke-linecap="round"/>
<!-- bulletin button -->
<rect x="1006.5" y="56" width="33.5" height="32" fill="#728e9b"/>
<path d="M1016.6 65.8 H1028.4 V74 L1025 77.3 H1016.6 Z" fill="none" stroke="#fff" stroke-width="1.5" stroke-linejoin="miter"/>
<path d="M1028.4 74 H1025 V77.3" fill="none" stroke="#fff" stroke-width="1.2"/>
</svg>
<span class="st" style="left:49px">0</span>
<span class="st" style="left:128.9px">686 / 37.34 KB</span>
<span class="st" style="left:297.4px">0</span>
<span class="st" style="left:380.4px">0</span>
<span class="st" style="left:457.2px">53</span>
<span class="st" style="left:542.6px">3</span>
<span class="st" style="left:622.4px">1</span>
<span class="st" style="left:705.6px">0</span>
<span class="st" id="clock" style="left:783.2px;letter-spacing:-0.42px">09:42:07 CET</span>
</div>
<div id="crumbs"><span>NiFi Flow</span></div>
<div id="strip"></div>
</body>
</html>
